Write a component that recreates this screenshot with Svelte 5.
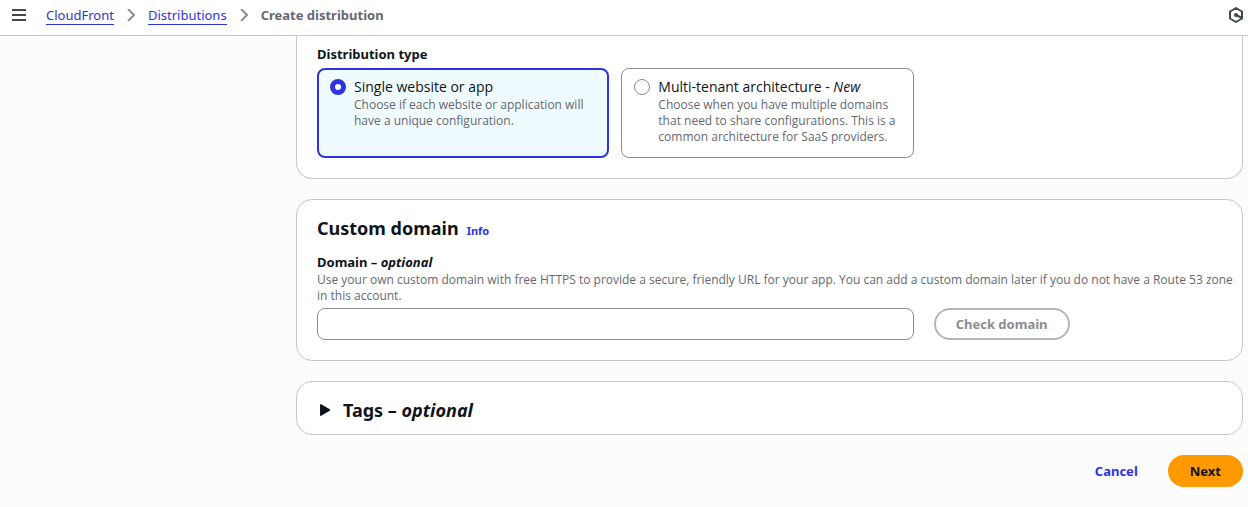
<script>
  let type = $state('single');
  let domain = $state('');
</script>

<header>
  <button class="icon menu" aria-label="Open navigation">
    <svg width="14" height="12" viewBox="0 0 14 12"><path d="M0 1h14M0 6h14M0 11h14" stroke="#424650" stroke-width="2" /></svg>
  </button>
  <nav aria-label="Breadcrumbs">
    <a href="#cloudfront">CloudFront</a>
    <svg class="chevron" width="8" height="12" viewBox="0 0 8 12"><path d="M1 0l6 6-6 6" /></svg>
    <a href="#distributions">Distributions</a>
    <svg class="chevron" width="8" height="12" viewBox="0 0 8 12"><path d="M1 0l6 6-6 6" /></svg>
    <span class="current">Create distribution</span>
  </nav>
  <button class="icon" aria-label="Open tools">
    <svg width="16" height="16" viewBox="0 0 16 16"><path d="M8 1l6 3.5v7L8 15l-6-3.5v-7z" fill="none" stroke="#424650" stroke-width="2" stroke-linejoin="round" /><circle cx="8" cy="8" r="2" fill="#424650" /><path d="M8 8l6 3" stroke="#424650" stroke-width="2" /></svg>
  </button>
</header>

<main>
  <section class="card first">
    <fieldset>
      <legend>Distribution type</legend>
      <div class="tiles">
        <label class="tile" class:selected={type === 'single'}>
          <input type="radio" name="type" value="single" bind:group={type} />
          <span class="copy">
            <span class="name">Single website or app</span>
            <span class="hint">Choose if each website or application will have a unique configuration.</span>
          </span>
        </label>
        <label class="tile" class:selected={type === 'multi'}>
          <input type="radio" name="type" value="multi" bind:group={type} />
          <span class="copy">
            <span class="name">Multi-tenant architecture - <em>New</em></span>
            <span class="hint">Choose when you have multiple domains that need to share configurations. This is a common architecture for SaaS providers.</span>
          </span>
        </label>
      </div>
    </fieldset>
  </section>

  <section class="card domain">
    <div class="heading">
      <h2>Custom domain</h2>
      <a class="info" href="#info">Info</a>
    </div>
    <label class="field" for="domain">Domain – <em>optional</em></label>
    <p class="hint" id="domain-hint">Use your own custom domain with free HTTPS to provide a secure, friendly URL for your app. You can add a custom domain later if you do not have a Route 53 zone in this account.</p>
    <div class="row">
      <input id="domain" type="text" aria-describedby="domain-hint" bind:value={domain} />
      <div><button class="check" disabled={!domain}>Check domain</button></div>
    </div>
  </section>

  <section class="card tags">
    <button class="expand" aria-expanded="false">
      <svg width="10" height="12" viewBox="0 0 10 12"><path d="M.8.8v10.4L9.4 6z" fill="#0f141a" stroke="#0f141a" stroke-width="1.5" stroke-linejoin="round" /></svg>
      <h2>Tags – <em>optional</em></h2>
    </button>
  </section>

  <div class="actions">
    <button class="cancel">Cancel</button>
    <button class="next">Next</button>
  </div>
</main>

<style>
  :global(body) {
    margin: 0;
    background: #fcfcfd;
    color: #0f141a;
    font: 13px/20px "Noto Sans", sans-serif;
  }
  header {
    display: flex;
    align-items: center;
    padding: 3px 4px 8px 12px;
    background: #fff;
    border-bottom: 1px solid #c6c6cd;
  }
  button {
    font: inherit;
    font-weight: 700;
    cursor: pointer;
  }
  .icon {
    display: flex;
    padding: 0;
    border: 0;
    background: none;
  }
  .menu {
    margin-right: 20px;
  }
  nav {
    display: flex;
    align-items: center;
    gap: 13px;
    flex: 1;
    min-height: 24px;
    line-height: 18px;
  }
  nav a {
    color: #2e33e1;
    text-decoration: none;
    border-bottom: 1px solid #2e33e1;
  }
  .chevron path {
    fill: none;
    stroke: #8c8c94;
    stroke-width: 2;
  }
  .current {
    color: #656871;
    font-weight: 700;
  }
  main {
    margin-left: 296px;
    padding: 0 5px 20px 0;
  }
  .card {
    background: #fff;
    border: 1px solid #c6c6cd;
    border-radius: 16px;
    padding: 20px;
    margin-bottom: 20px;
  }
  .first {
    border-top: 0;
    border-radius: 0 0 16px 16px;
    padding-top: 8px;
  }
  fieldset {
    margin: 0;
    padding: 0;
    border: 0;
    min-width: 0;
  }
  legend {
    padding: 0 0 4px;
    font-weight: 700;
  }
  .tiles {
    width: calc((100% + 20px) * 2 / 3 - 20px);
    display: grid;
    grid-template-columns: 1fr 1fr;
    gap: 12px;
  }
  .tile {
    display: flex;
    gap: 8px;
    padding: 9px 12px 12px;
    border: 1px solid #8c8c94;
    border-radius: 8px;
    cursor: pointer;
  }
  .selected {
    background: #f0fbff;
    border: 2px solid #2e33e1;
    padding: 8px 11px 11px;
  }
  input[type="radio"] {
    appearance: none;
    flex: none;
    box-sizing: border-box;
    width: 16px;
    height: 16px;
    margin: 1px 0 0;
    border: 1px solid #8c8c94;
    border-radius: 50%;
    background: #fff;
  }
  input[type="radio"]:checked {
    border: 5px solid #2e33e1;
  }
  .copy,
  .copy > span {
    display: block;
  }
  .copy .name {
    padding-bottom: 1px;
    font-family: "Open Sans", sans-serif;
    font-size: 14px;
    line-height: 18px;
  }
  .hint {
    margin: 0;
    color: #656871;
    font-family: "Open Sans", sans-serif;
    font-size: 12px;
    line-height: 16px;
  }
  .domain {
    padding-top: 16px;
  }
  .domain .hint {
    margin-right: -16px;
  }
  .heading {
    display: flex;
    align-items: baseline;
    gap: 8px;
    margin-bottom: 11px;
  }
  h2 {
    margin: 0;
    font-size: 18px;
    line-height: 24px;
  }
  .info {
    color: #2e33e1;
    font-size: 11px;
    font-weight: 700;
    text-decoration: none;
  }
  .field {
    display: block;
    font-weight: 700;
  }
  .row {
    display: grid;
    grid-template-columns: calc((100% + 20px) * 2 / 3 - 20px) 1fr;
    gap: 20px;
    margin-top: 4px;
  }
  input[type="text"] {
    box-sizing: border-box;
    height: 32px;
    padding: 4px 12px;
    border: 1px solid #8c8c94;
    border-radius: 8px;
    font: inherit;
  }
  .check,
  .next,
  .cancel {
    height: 32px;
    padding: 0 20px;
    border: 2px solid #b4b4bb;
    border-radius: 16px;
    background: #fff;
  }
  .check:disabled {
    color: #8c8c94;
  }
  .tags {
    padding: 16px 20px 12px;
  }
  .expand {
    display: flex;
    align-items: center;
    gap: 13px;
    padding: 0 0 0 3px;
    border: 0;
    background: none;
    color: inherit;
  }
  .actions {
    display: flex;
    justify-content: flex-end;
    gap: 8px;
  }
  .cancel {
    border-color: transparent;
    background: none;
    color: #2e33e1;
  }
  .next {
    border-color: #ff9900;
    background: #ff9900;
    color: #0f141a;
  }
</style>
